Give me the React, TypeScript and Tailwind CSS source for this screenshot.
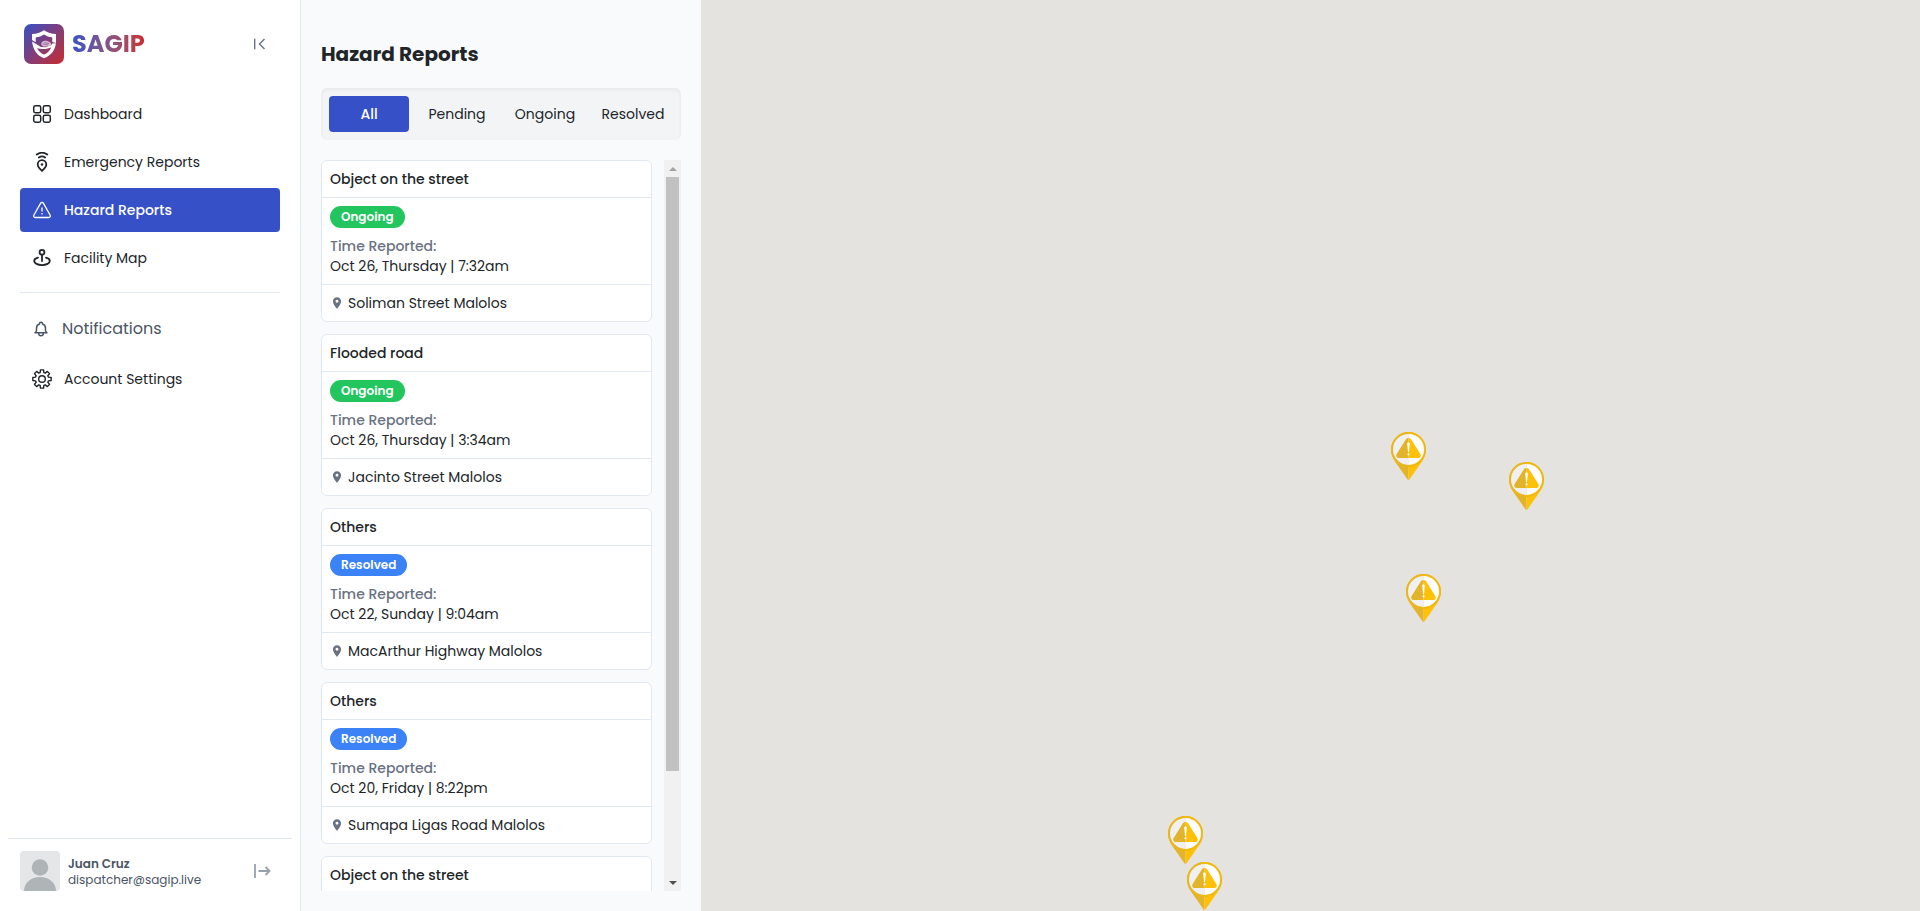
import { useEffect, useRef, useState } from "react";
import { HiOutlineBell } from "react-icons/hi";
import { MdLocationOn } from "react-icons/md";

type IconProps = { className?: string };

function Shield() {
  return (
    <svg viewBox="0 0 40 40" className="size-10 shrink-0" aria-hidden="true">
      <defs>
        <linearGradient id="logo-fill" x1="0" y1="0" x2="1" y2="1">
          <stop offset="0" stopColor="#3650c7" />
          <stop offset="1" stopColor="#cb2b2b" />
        </linearGradient>
      </defs>
      <rect width="40" height="40" rx="7" fill="url(#logo-fill)" />
      <path
        d="M20 6.300C16.500 8.800 12.500 9.800 8 10v6l3.700 2.200v-4.700C14.900 13 17.600 12 20 10.500c2.500 1.500 5.100 2.500 8.300 3v4.500L32 19v-9c-4.500-.2-8.500-1.200-12-3.700Z"
        fill="#fff"
      />
      <path
        d="M8.100 17.500 17 23l4.500.2 5.500-1.800 1.200-2 3.700-.2C31 26.500 27 31.500 20 34.200 13 31.500 9 26 8.100 17.500Zm4.900 6.800c1.500 3 4 5 7 6.300 3.200-1.400 5.900-3.900 7.300-7.400-2.300 1.200-5 1.700-7.800 1.800-2.400 0-4.700-.1-6.500-.7Z"
        fill="#fff"
        fillRule="evenodd"
      />
      <path d="M17.500 18.400c1.400-1.500 3.200-2 5.200-1.600l3.800 1.800 1 2.700-3.700 1.200h-4.600l-2-1.700Z" fill="#fff" opacity="0.650" />
      <path d="m18.500 19.800 5.500 1.200m-3.500-2.600 4.500 1.300" stroke="#8a4a8c" strokeWidth="0.700" fill="none" />
    </svg>
  );
}

function GridIcon({ className }: IconProps) {
  return (
    <svg viewBox="0 0 20 20" fill="none" stroke="currentColor" strokeWidth="1.500" className={className} aria-hidden="true">
      <rect x="1.700" y="1.700" width="7" height="7" rx="1.700" />
      <rect x="11.300" y="1.700" width="7" height="7" rx="1.700" />
      <rect x="1.700" y="11.300" width="7" height="7" rx="1.700" />
      <rect x="11.300" y="11.300" width="7" height="7" rx="1.700" />
    </svg>
  );
}

function BeaconIcon({ className }: IconProps) {
  return (
    <svg viewBox="0 0 20 20" fill="none" stroke="currentColor" strokeWidth="1.800" strokeLinecap="round" className={className} aria-hidden="true">
      <path d="M4.700 2.500c3.200-2.200 7.400-2.200 10.600 0M6.900 5.500c1.900-1.300 4.300-1.300 6.200 0" />
      <path d="M10 18.800c2.500-2.200 4.300-4 4.300-6.300a4.300 4.300 0 0 0-8.600 0c0 2.300 1.800 4.100 4.300 6.300Z" />
      <circle cx="10" cy="12.500" r="1.200" fill="currentColor" stroke="none" />
    </svg>
  );
}

function HazardIcon({ className }: IconProps) {
  return (
    <svg viewBox="0 0 20 20" fill="none" stroke="currentColor" strokeWidth="1.300" strokeLinejoin="round" className={className} aria-hidden="true">
      <path d="M8.700 3.100 1.800 15.300a1.500 1.500 0 0 0 1.300 2.200h13.800a1.500 1.500 0 0 0 1.300-2.200L11.300 3.100a1.500 1.500 0 0 0-2.600 0Z" />
      <path d="M10 7.500v4M10 13v1.600" strokeWidth="1.300" />
    </svg>
  );
}

function PlaceIcon({ className }: IconProps) {
  return (
    <svg viewBox="0 0 20 20" fill="none" stroke="currentColor" strokeWidth="1.800" strokeLinecap="round" className={className} aria-hidden="true">
      <circle cx="10" cy="4.200" r="2.400" />
      <path d="M10 6.700v6.300M6 9.600C3.500 10.200 2.200 11.500 2.200 13c0 2.300 3.500 4.100 7.800 4.100s7.800-1.800 7.800-4.100c0-1.500-1.300-2.800-3.800-3.400" />
    </svg>
  );
}

const gearOutline =
  Array.from({ length: 8 }, (_, tooth) =>
    [
      [-0.28, 6.7],
      [-0.17, 9.3],
      [0.17, 9.3],
      [0.28, 6.7],
    ]
      .map(([turn, radius]) => {
        const angle = (tooth * Math.PI) / 4 + turn;
        return `${(10 + radius * Math.sin(angle)).toFixed(2)},${(10 - radius * Math.cos(angle)).toFixed(2)}`;
      })
      .join(" L"),
  ).reduce((path, tooth) => `${path}${path ? " L" : "M"}${tooth}`, "") + "Z";

function GearIcon({ className }: IconProps) {
  return (
    <svg viewBox="0 0 20 20" fill="none" stroke="currentColor" strokeWidth="1.400" strokeLinejoin="round" className={className} aria-hidden="true">
      <path d={gearOutline} />
      <circle cx="10" cy="10" r="3.300" />
    </svg>
  );
}

const mainLinks = [
  { label: "Dashboard", Icon: GridIcon, active: false },
  { label: "Emergency Reports", Icon: BeaconIcon, active: false },
  { label: "Hazard Reports", Icon: HazardIcon, active: true },
  { label: "Facility Map", Icon: PlaceIcon, active: false },
];

function Sidebar() {
  return (
    <aside className="flex w-[301px] shrink-0 flex-col border-r border-slate-200 bg-white">
      <div className="flex items-center justify-between py-6 pr-[33px] pl-6">
        <a href="#home" className="flex items-center gap-2">
          <Shield />
          <span className="bg-linear-to-r from-[#3650c7] to-[#cb2b2b] bg-clip-text text-2xl font-bold text-transparent">SAGIP</span>
        </a>
        <button type="button" aria-label="Collapse sidebar" className="text-gray-500">
          <svg viewBox="0 0 14 14" fill="none" stroke="currentColor" strokeWidth="1.400" className="size-[14px]">
            <path d="M1.700 1.700v10.600M11.500 2 6.500 7l5 5" />
          </svg>
        </button>
      </div>
      <nav className="flex flex-col px-5 pt-1">
        <ul className="flex flex-col gap-1 border-b border-slate-200 pb-3">
          {mainLinks.map(({ label, Icon, active }) => (
            <li key={label}>
              <a
                href={"#" + label.toLowerCase().replace(" ", "-")}
                aria-current={active ? "page" : undefined}
                className={
                  active
                    ? "flex h-11 items-center gap-3 rounded bg-[#3650c7] px-3 font-medium text-white"
                    : "flex h-11 items-center gap-3 rounded px-3"
                }
              >
                <Icon className="size-5" />
                {label}
              </a>
            </li>
          ))}
        </ul>
        <button type="button" className="mt-3 flex h-12 items-center gap-3 px-3 text-base text-gray-600">
          <HiOutlineBell className="size-[18px]" />
          Notifications
        </button>
        <a href="#settings" className="mt-1 flex h-11 items-center gap-3 px-3">
          <GearIcon className="size-5" />
          Account Settings
        </a>
      </nav>
      <div className="mx-2 mt-auto flex items-center gap-2 border-t border-slate-200 px-3 pt-3 pb-5">
        <svg viewBox="0 0 40 40" className="size-10 rounded bg-[#e4e6e7]" aria-hidden="true">
          <circle cx="20" cy="16.500" r="8.300" fill="#afb4b7" />
          <path d="M4 40c0-8 7-14 16-14s16 6 16 14Z" fill="#afb4b7" />
        </svg>
        <div className="flex-1 pt-px text-xs leading-4 text-gray-600">
          <p className="font-semibold">Juan Cruz</p>
          <p>dispatcher@sagip.live</p>
        </div>
        <button type="button" aria-label="Log out" className="mr-2 text-gray-400">
          <svg viewBox="0 0 20 20" fill="none" stroke="currentColor" strokeWidth="1.800" className="size-5">
            <path d="M3 3v14M6.500 10h11M13.500 6l4 4-4 4" />
          </svg>
        </button>
      </div>
    </aside>
  );
}

type Status = "Pending" | "Ongoing" | "Resolved";
type Report = { title: string; status: Status; time: string; place: string };

const reports: Report[] = [
  { title: "Object on the street", status: "Ongoing", time: "Oct 26, Thursday | 7:32am", place: "Soliman Street Malolos" },
  { title: "Flooded road", status: "Ongoing", time: "Oct 26, Thursday | 3:34am", place: "Jacinto Street Malolos" },
  { title: "Others", status: "Resolved", time: "Oct 22, Sunday | 9:04am", place: "MacArthur Highway Malolos" },
  { title: "Others", status: "Resolved", time: "Oct 20, Friday | 8:22pm", place: "Sumapa Ligas Road Malolos" },
  { title: "Object on the street", status: "Resolved", time: "Oct 20, Friday | 8:22pm", place: "Malolos" },
];

const badgeColors: Record<Status, string> = {
  Pending: "bg-yellow-500",
  Ongoing: "bg-[#22c55e]",
  Resolved: "bg-[#3b82f6]",
};

function ReportCard({ report }: { report: Report }) {
  return (
    <li className="shrink-0 divide-y divide-slate-200 rounded-md border border-slate-200 bg-white">
      <h2 className="px-2 py-2 font-medium">{report.title}</h2>
      <div className="p-2">
        <span className={"inline-flex h-[22px] items-center rounded-full px-[11px] align-top text-xs font-semibold text-white " + badgeColors[report.status]}>
          {report.status}
        </span>
        <p className="mt-2 font-medium text-gray-500">Time Reported:</p>
        <p>{report.time}</p>
      </div>
      <p className="flex items-center gap-1 px-2 py-2">
        <MdLocationOn className="size-[14px] text-gray-500" />
        {report.place}
      </p>
    </li>
  );
}

function ReportList({ items }: { items: Report[] }) {
  const list = useRef<HTMLUListElement>(null);
  const [thumb, setThumb] = useState({ size: 1, offset: 0 });

  const measure = () => {
    const el = list.current;
    if (el) setThumb({ size: el.clientHeight / el.scrollHeight, offset: el.scrollTop / el.scrollHeight });
  };
  const scroll = (by: number) => list.current?.scrollBy({ top: by });

  useEffect(() => {
    measure();
    window.addEventListener("resize", measure);
    return () => window.removeEventListener("resize", measure);
  }, [items]);

  return (
    <div className="mt-5 flex min-h-0 flex-1 gap-3">
      <ul ref={list} onScroll={measure} className="flex flex-1 flex-col gap-3 overflow-y-auto [scrollbar-width:none]">
        {items.map((report, index) => (
          <ReportCard key={index} report={report} />
        ))}
      </ul>
      <div className="flex w-[17px] flex-col bg-[#f1f1f1]">
        <button type="button" aria-label="Scroll up" onClick={() => scroll(-60)} className="flex h-[17px] items-center justify-center text-[#a3a3a3]">
          <svg viewBox="0 0 8 4" className="h-1 w-2" fill="currentColor">
            <path d="M4 0l4 4H0Z" />
          </svg>
        </button>
        <div className="flex-1 px-0.5">
          <div
            className="relative bg-[#c1c1c1]"
            style={{ height: `${thumb.size * 100}%`, top: `${thumb.offset * 100}%` }}
          />
        </div>
        <button type="button" aria-label="Scroll down" onClick={() => scroll(60)} className="flex h-[17px] items-center justify-center text-[#505050]">
          <svg viewBox="0 0 8 4" className="h-1 w-2" fill="currentColor">
            <path d="M4 4L0 0h8Z" />
          </svg>
        </button>
      </div>
    </div>
  );
}

const tabs = ["All", "Pending", "Ongoing", "Resolved"];

function ReportsPanel() {
  const [tab, setTab] = useState("All");
  const [shown, setShown] = useState(reports);

  const choose = (name: string) => {
    setTab(name);
    setShown(name === "All" ? reports : reports.filter((report) => report.status === name));
  };

  return (
    <section className="flex w-[400px] shrink-0 flex-col bg-[#f8fafc] p-5">
      <h1 className="mt-5 text-xl leading-7 font-bold">Hazard Reports</h1>
      <div role="tablist" className="mt-5 grid grid-cols-4 gap-2 rounded-md bg-gray-100 p-2 inset-shadow-sm">
        {tabs.map((name) => (
          <button
            key={name}
            type="button"
            role="tab"
            aria-selected={tab === name}
            onClick={() => choose(name)}
            className={tab === name ? "h-9 rounded bg-[#3650c7] font-medium text-white" : "h-9 rounded"}
          >
            {name}
          </button>
        ))}
      </div>
      <ReportList items={shown} />
    </section>
  );
}

function HazardPin({ className }: IconProps) {
  return (
    <svg viewBox="0 0 35 48" className={"absolute h-12 w-[35px] " + className} role="img" aria-label="Hazard">
      <path d="M17.500 0A17.500 17.500 0 0 0 0 17.500c0 4.500 1.500 8 3.500 11.200L16.600 47.500q.4.500.9.500Z" fill="#e2b32b" />
      <path d="M17.500 0A17.500 17.500 0 0 1 35 17.500c0 4.500-1.500 8-3.500 11.200L18.400 47.500q-.4.500-.9.500Z" fill="#ffc107" />
      <circle cx="17.500" cy="17.500" r="16.700" fill="none" stroke="#eeb718" strokeWidth="1.600" />
      <path d="M17.500 1.900a15.500 15.500 0 0 0 0 31Z" fill="#f0f0f0" />
      <path d="M17.500 1.900a15.500 15.500 0 0 1 0 31Z" fill="#fff" />
      <path d="M17.500 6c-1.200 0-2.200.6-2.900 1.800L5.800 21.700c-1.300 2.200-.3 4.300 2.200 4.300h9.500Z" fill="#e2b32b" />
      <path d="M17.500 6c1.200 0 2.200.6 2.900 1.800l8.800 13.900c1.300 2.200.3 4.300-2.200 4.300h-9.500Z" fill="#ffc107" />
      <path d="M16.200 11.600c0-1.500 2.600-1.500 2.600 0l-.8 8.400h-1Z" fill="#fff" />
      <circle cx="17.500" cy="22.300" r="1.100" fill="#fff" />
    </svg>
  );
}

export default function App() {
  return (
    <div className="flex h-screen overflow-hidden bg-white font-[Poppins,Inter,sans-serif] text-sm leading-5 text-[#212529]">
      <Sidebar />
      <ReportsPanel />
      <main aria-label="Map" className="relative flex-1 overflow-hidden bg-[#e5e3df]">
        <HazardPin className="top-[432px] left-[690px]" />
        <HazardPin className="top-[462px] left-[808px]" />
        <HazardPin className="top-[574px] left-[705px]" />
        <HazardPin className="top-[816px] left-[467px]" />
        <HazardPin className="top-[862px] left-[486px]" />
      </main>
    </div>
  );
}
